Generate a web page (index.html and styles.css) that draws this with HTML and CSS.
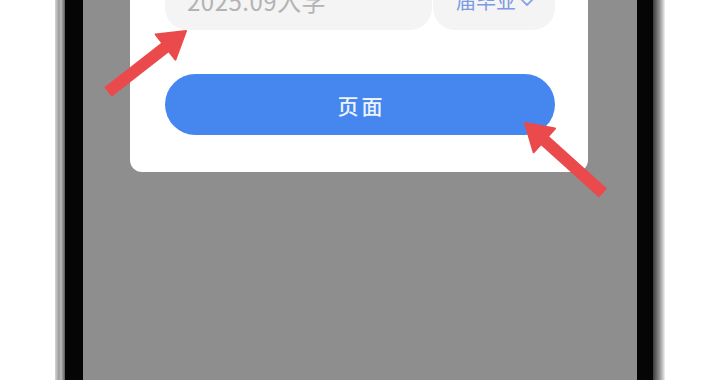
FILE: index.html
```html
<!DOCTYPE html>
<html lang="zh">
<head>
<meta charset="utf-8">
<link rel="stylesheet" href="styles.css">
</head>
<body>
<div class="phone">
  <div class="edge-left"></div>
  <div class="bezel-left"></div>
  <div class="screen">
    <div class="card">
      <div class="fields">
        <div class="field field-date">2025.09入学</div>
        <div class="field field-pick">
          <span class="pick-text">届毕业</span>
          <svg class="chev" width="16" height="16" viewBox="0 0 16 16"><path d="M2 5 L8 11 L14 5" fill="none" stroke="#8aa6e8" stroke-width="1.8" stroke-linecap="round" stroke-linejoin="round"/></svg>
        </div>
      </div>
      <button class="primary">页面</button>
    </div>
  </div>
  <div class="bezel-right"></div>
  <div class="edge-right"></div>
</div>
<svg class="arrows" width="720" height="380" viewBox="0 0 720 380">
  <g fill="#ea4a4c" stroke="#ea4a4c">
    <line x1="108" y1="92" x2="167" y2="46" stroke-width="12" stroke-linecap="butt"/>
    <polygon points="186,31 175.4,59.6 155.6,34.4" stroke-width="2" stroke-linejoin="round"/>
    <line x1="603" y1="193" x2="543" y2="139" stroke-width="12" stroke-linecap="butt"/>
    <polygon points="525,123 533.6,152.3 555,128.5" stroke-width="2" stroke-linejoin="round"/>
  </g>
</svg>
</body>
</html>
```
FILE: styles.css
```css
html, body {
  margin: 0;
  padding: 0;
  background: #ffffff;
  width: 720px;
  height: 380px;
  overflow: hidden;
  font-family: "Noto Sans CJK SC", "Noto Sans", sans-serif;
}
.phone {
  display: flex;
  margin-left: 55px;
  width: 610px;
  height: 380px;
}
.edge-left {
  width: 10px;
  background: linear-gradient(to right, #d6d6d6, #9a9a9a 40%, #bcbcbc 60%, #5a5a5a);
}
.bezel-left {
  width: 18px;
  background: #050505;
}
.screen {
  width: 554px;
  background: #8e8e8e;
  padding-left: 47px;
  box-sizing: border-box;
}
.bezel-right {
  width: 16px;
  background: #050505;
}
.edge-right {
  width: 12px;
  background: linear-gradient(to right, #3a3a3a, #8a8a8a 50%, #c4c4c4 80%, #f2f2f2);
}
.card {
  margin-top: -42px;
  width: 458px;
  box-sizing: border-box;
  background: #ffffff;
  border-radius: 12px;
  padding: 20px 33px 37px 35px;
  display: flex;
  flex-direction: column;
  gap: 44px;
}
.fields {
  display: flex;
  gap: 1px;
}
.field {
  height: 52px;
  box-sizing: border-box;
  background: #f4f4f4;
  border-radius: 22px;
  display: flex;
  align-items: center;
  padding-bottom: 7px;
}
.field-date {
  width: 267px;
  padding-left: 22px;
  font-size: 24px;
  color: #b3b3b3;
  letter-spacing: 0.5px;
}
.field-pick {
  flex: 1;
  padding-left: 23px;
  gap: 3px;
}
.pick-text {
  font-size: 20px;
  color: #7d9be2;
}
.chev {
  margin-top: 2px;
}
.primary {
  height: 61px;
  border: none;
  border-radius: 31px;
  background: #4586ef;
  color: #eef3ff;
  font-family: "Noto Sans CJK SC", "Noto Sans", sans-serif;
  font-size: 21px;
  font-weight: 500;
  letter-spacing: 3px;
  padding: 0 0 0 3px;
}
.arrows {
  position: absolute;
  left: 0;
  top: 0;
  pointer-events: none;
}
```
